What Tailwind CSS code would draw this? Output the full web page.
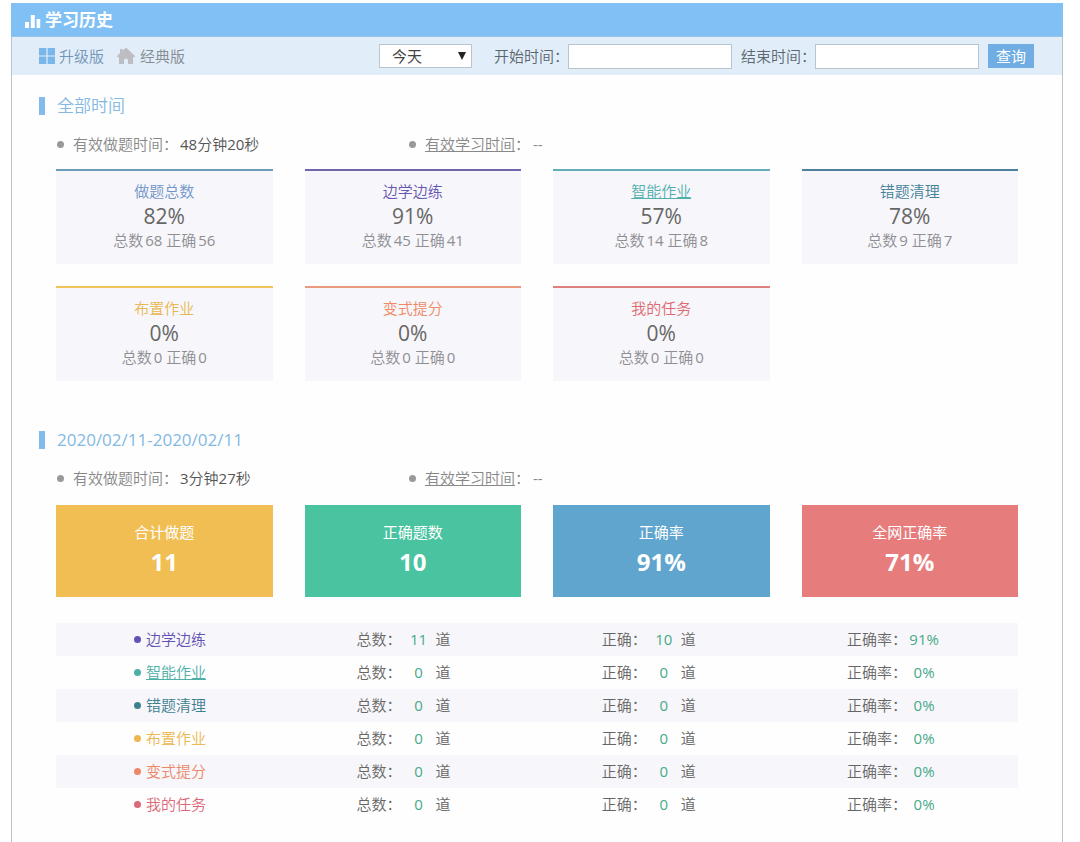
<!DOCTYPE html>
<html lang="zh-CN">
<head>
<meta charset="utf-8">
<title>学习历史</title>
<script src="https://cdn.jsdelivr.net/npm/@tailwindcss/browser@4"></script>
</head>
<body class="bg-white font-['Open_Sans','Noto_Sans_CJK_SC',sans-serif] text-[15px] leading-6 font-[350] text-[#666]">
<div class="pt-[3px] pl-[11px] pr-[17px]">
<div class="flex min-h-[calc(100vh-3px)] flex-col border-x border-[#b9c3cc] bg-[#fefefe]">
  <header class="-mx-px flex h-[34px] items-center gap-1 border-b border-[#9cc3e2] bg-[#80c0f4] pl-[14px] text-white">
    <svg class="mt-1 h-4 w-4" viewBox="0 0 16 16" fill="currentColor" aria-hidden="true"><path d="M0 8h4v6H0zM5.800 1h4v13h-4zM11.600 5h3.600v9h-3.600z"/></svg>
    <h1 class="text-[17px] font-bold">学习历史</h1>
  </header>

  <form class="flex h-[38px] items-center bg-[#e1eef9] pr-[28px] pl-[27px]">
    <a href="#" class="flex items-center gap-1 text-[#7396b8]">
      <svg class="h-4 w-4" viewBox="0 0 16 16" fill="#7ab6ea" aria-hidden="true"><path d="M0 0h7.4v7.4H0zM8.6 0H16v7.4H8.6zM0 8.6h7.4V16H0zM8.6 8.6H16V16H8.6z"/></svg>升级版</a>
    <a href="#" class="ml-[13px] flex items-center gap-[5px] text-[#868b92]">
      <svg class="h-[18px] w-[18px]" viewBox="0 0 18 18" fill="#bdbdc2" aria-hidden="true"><path d="M9 .5 18 9l-.8 1.200H16V17h-5v-3.500a2 2 0 0 0-4 0V17H2v-6.800H.8L0 9l3-2.900V2h2.500v1.800z"/></svg>经典版</a>
    <div class="relative ml-auto">
      <select aria-label="时间范围" class="h-6 w-[93px] appearance-none border border-[#b8c4ce] bg-white pl-3 text-[15px] leading-[22px] font-normal text-[#444]"><option>今天</option><option>昨天</option><option>本周</option></select>
      <svg class="pointer-events-none absolute top-2 right-[6px] h-2 w-2" viewBox="0 0 8 8" fill="#222" aria-hidden="true"><path d="M0 0h8L4 8z"/></svg>
    </div>
    <label for="start" class="ml-[22px] text-[#5c6670]">开始时间：</label>
    <input id="start" type="text" class="ml-[-1px] h-[25px] w-[164px] border border-[#b8c4ce] bg-white px-2">
    <label for="end" class="ml-[9px] text-[#5c6670]">结束时间：</label>
    <input id="end" type="text" class="ml-[-1px] h-[25px] w-[164px] border border-[#b8c4ce] bg-white px-2">
    <button type="button" class="ml-[9px] h-6 w-[46px] bg-[#6fade2] leading-6 font-normal text-white">查询</button>
  </form>

  <main class="px-[44px] pt-[19px]">
    <section>
      <h2 class="-ml-[17px] flex items-center gap-3 text-[17px] text-[#84b9e2]"><span class="h-[18px] w-[6px] bg-[#82bbec]"></span>全部时间</h2>
      <div class="mt-[14px] flex">
        <p class="flex w-[353px] items-center pl-[1px] text-[#888]"><span class="mr-[9px] size-[7px] rounded-full bg-[#999]"></span>有效做题时间：<span class="ml-[2px] text-[#555]"><span class="font-normal">48</span>分钟<span class="font-normal">20</span>秒</span></p>
        <p class="flex items-center text-[#888]"><span class="mr-[9px] size-[7px] rounded-full bg-[#999]"></span><a href="#" class="underline">有效学习时间</a>：<span class="ml-[3px] font-normal">--</span></p>
      </div>
      <div class="mt-[13px] grid grid-cols-4 gap-x-8 gap-y-[22px] text-center text-[#8e8e93]">
        <article class="h-[95px] border-t-2 border-[#6c9cba] bg-[#f7f6fa] pt-2"><h3 class="text-[#6f95cb]">做题总数</h3><p class="text-[21px] leading-[26px] font-normal text-[#666]">82%</p><p class="leading-[23px]">总数<span class="ml-[2px] font-normal">68</span> 正确<span class="ml-[2px] font-normal">56</span></p></article>
        <article class="h-[95px] border-t-2 border-[#7266aa] bg-[#f7f6fa] pt-2"><h3 class="text-[#6657b5]">边学边练</h3><p class="text-[21px] leading-[26px] font-normal text-[#666]">91%</p><p class="leading-[23px]">总数<span class="ml-[2px] font-normal">45</span> 正确<span class="ml-[2px] font-normal">41</span></p></article>
        <article class="h-[95px] border-t-2 border-[#65aeb9] bg-[#f7f6fa] pt-2"><h3><a href="#" class="text-[#4eafad] underline">智能作业</a></h3><p class="text-[21px] leading-[26px] font-normal text-[#666]">57%</p><p class="leading-[23px]">总数<span class="ml-[2px] font-normal">14</span> 正确<span class="ml-[2px] font-normal">8</span></p></article>
        <article class="h-[95px] border-t-2 border-[#4f819f] bg-[#f7f6fa] pt-2"><h3 class="text-[#44839a]">错题清理</h3><p class="text-[21px] leading-[26px] font-normal text-[#666]">78%</p><p class="leading-[23px]">总数<span class="ml-[2px] font-normal">9</span> 正确<span class="ml-[2px] font-normal">7</span></p></article>
        <article class="h-[95px] border-t-2 border-[#f0c257] bg-[#f7f6fa] pt-2"><h3 class="text-[#e9b850]">布置作业</h3><p class="text-[21px] leading-[26px] font-normal text-[#666]">0%</p><p class="leading-[23px]">总数<span class="ml-[2px] font-normal">0</span> 正确<span class="ml-[2px] font-normal">0</span></p></article>
        <article class="h-[95px] border-t-2 border-[#e9997c] bg-[#f7f6fa] pt-2"><h3 class="text-[#ee8a66]">变式提分</h3><p class="text-[21px] leading-[26px] font-normal text-[#666]">0%</p><p class="leading-[23px]">总数<span class="ml-[2px] font-normal">0</span> 正确<span class="ml-[2px] font-normal">0</span></p></article>
        <article class="h-[95px] border-t-2 border-[#de7f80] bg-[#f7f6fa] pt-2"><h3 class="text-[#e0686f]">我的任务</h3><p class="text-[21px] leading-[26px] font-normal text-[#666]">0%</p><p class="leading-[23px]">总数<span class="ml-[2px] font-normal">0</span> 正确<span class="ml-[2px] font-normal">0</span></p></article>
      </div>
    </section>

    <section class="mt-[47px]">
      <h2 class="-ml-[17px] flex items-center gap-3 text-[17px] font-normal text-[#84b9e2]"><span class="h-[18px] w-[6px] bg-[#82bbec]"></span>2020/02/11-2020/02/11</h2>
      <div class="mt-[14px] flex">
        <p class="flex w-[353px] items-center pl-[1px] text-[#888]"><span class="mr-[9px] size-[7px] rounded-full bg-[#999]"></span>有效做题时间：<span class="ml-[2px] text-[#555]"><span class="font-normal">3</span>分钟<span class="font-normal">27</span>秒</span></p>
        <p class="flex items-center text-[#888]"><span class="mr-[9px] size-[7px] rounded-full bg-[#999]"></span><a href="#" class="underline">有效学习时间</a>：<span class="ml-[3px] font-normal">--</span></p>
      </div>
      <div class="mt-[15px] grid grid-cols-4 gap-8 text-center font-normal text-white">
        <article class="h-[92px] bg-[#f0be52] pt-[15px]"><h3>合计做题</h3><p class="text-2xl leading-9 font-bold">11</p></article>
        <article class="h-[92px] bg-[#49c3a0] pt-[15px]"><h3>正确题数</h3><p class="text-2xl leading-9 font-bold">10</p></article>
        <article class="h-[92px] bg-[#60a5ce] pt-[15px]"><h3>正确率</h3><p class="text-2xl leading-9 font-bold">91%</p></article>
        <article class="h-[92px] bg-[#e67c7c] pt-[15px]"><h3>全网正确率</h3><p class="text-2xl leading-9 font-bold">71%</p></article>
      </div>
      <table id="detail" class="mt-[26px] w-full table-fixed text-left text-[#666]">
        <colgroup><col class="w-[25%]"><col class="w-[25.5%]"><col class="w-[25.5%]"><col class="w-[24%]"></colgroup>
        <tbody></tbody>
      </table>
    </section>
  </main>
</div>
</div>
<script>
const rows = [
  ['边学边练', 'text-[#6252b5]', 11, 10, '91%'],
  ['智能作业', 'text-[#4eafa6] underline', 0, 0, '0%'],
  ['错题清理', 'text-[#3e7f90]', 0, 0, '0%'],
  ['布置作业', 'text-[#eab84e]', 0, 0, '0%'],
  ['变式提分', 'text-[#ec8768]', 0, 0, '0%'],
  ['我的任务', 'text-[#dd6878]', 0, 0, '0%']
];
const num = v => `<span class="inline-block w-[34px] text-center font-normal text-[#47aa88]">${v}</span>`;
document.querySelector('#detail tbody').innerHTML = rows.map(([name, color, total, right, rate]) => `
  <tr class="h-[33px] odd:bg-[#f7f6fa]">
    <th scope="row" class="pb-px pl-[78px] font-[350]"><span class="flex items-center gap-[5px] ${color}"><span class="size-[7px] rounded-full bg-current"></span>${color.includes('underline') ? `<a href="#" class="underline">${name}</a>` : name}</span></th>
    <td class="pb-[2px] pl-[60px]">总数：${num(total)}道</td>
    <td class="pb-[2px] pl-[60px]">正确：${num(right)}道</td>
    <td class="pb-[2px] pl-[60px]">正确率：${num(rate)}</td>
  </tr>`).join('');
</script>
</body>
</html>
